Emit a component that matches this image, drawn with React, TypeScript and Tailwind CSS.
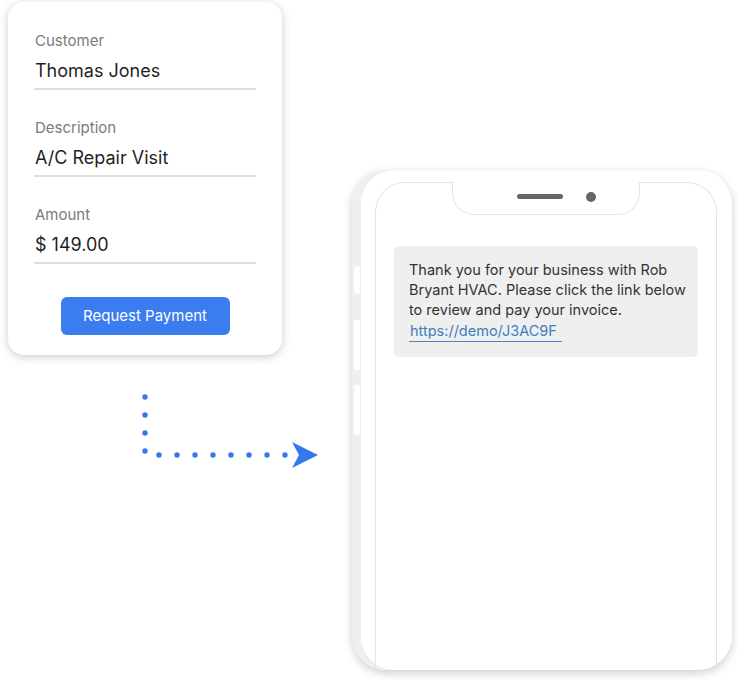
import React from "react";

function Field({ label, value }: { label: string; value: string }) {
  return (
    <div className="border-b-2 border-[#dedede] pb-[5px]">
      <div className="pl-px text-[15px] leading-[20px] text-[#7b7b7b]">{label}</div>
      <div className="mt-[8px] pl-px text-[18px] leading-[24px] text-[#1f1f1f]">{value}</div>
    </div>
  );
}

function Arrow() {
  const vert = [397, 415, 433, 451];
  const horiz = [159, 177, 195, 213, 231, 249, 267, 285];
  return (
    <svg width="344" height="130" viewBox="0 0 344 130" className="block">
      <g transform="translate(-8,-355)" fill="#3677ee">
        {vert.map((y) => (
          <circle key={"v" + y} cx={145} cy={y} r={2.7} />
        ))}
        {horiz.map((x) => (
          <circle key={"h" + x} cx={x} cy={455} r={2.7} />
        ))}
        <path d="M292 442 L318 455 L292 468 L299 455 Z" />
      </g>
    </svg>
  );
}

export default function App() {
  return (
    <div className="w-[738px] h-[680px] bg-white flex font-['Inter','Noto_Sans',sans-serif]">
      <div className="flex flex-col w-[344px] pl-[8px] pt-[2px]">
        <div className="w-[274px] rounded-[16px] bg-white shadow-[0_2px_10px_rgba(0,0,0,0.2)] px-[26px] pt-[29px] pb-[20px] flex flex-col">
          <Field label="Customer" value="Thomas Jones" />
          <div className="mt-[28px]">
            <Field label="Description" value="A/C Repair Visit" />
          </div>
          <div className="mt-[28px]">
            <Field label="Amount" value="$ 149.00" />
          </div>
          <div className="mt-[33px] flex justify-center">
            <button className="w-[169px] h-[38px] rounded-[6px] bg-[#3b7cef] text-white text-[15px] leading-[20px]">
              Request Payment
            </button>
          </div>
        </div>
        <Arrow />
      </div>
      <div className="pt-[170px] pl-[8px]">
        <div className="relative w-[380px] h-[500px] rounded-[34px] bg-white overflow-hidden shadow-[inset_9px_0_0_#efefef,0_3px_10px_rgba(0,0,0,0.2)] pl-[23px] pr-[15px] pt-[12px]">
          <div className="absolute left-[2px] top-[96px] w-[6px] h-[28px] rounded-[2px] bg-white" />
          <div className="absolute left-[2px] top-[150px] w-[6px] h-[50px] rounded-[2px] bg-white" />
          <div className="absolute left-[2px] top-[215px] w-[6px] h-[50px] rounded-[2px] bg-white" />
          <div className="h-[520px] rounded-t-[30px] border-x border-t border-[#e4e4e4] flex flex-col">
            <div className="self-center -mt-px w-[188px] h-[33px] bg-white border-x border-b border-[#e4e4e4] rounded-b-[22px] flex items-center pl-[64px] pb-[3px]">
              <div className="w-[46px] h-[5px] rounded-full bg-[#666666]" />
              <div className="ml-[23px] w-[10px] h-[10px] rounded-full bg-[#666666]" />
            </div>
            <div className="ml-[18px] mt-[31px] w-[304px] rounded-[5px] bg-[#efefef] pl-[15px] pr-[6px] pt-[14px] pb-[15px] text-[14.5px] leading-[20px] text-[#333333]">
              <div>
                Thank you for your business with Rob Bryant HVAC. Please click the link below to review and pay your invoice.
              </div>
              <div className="inline-block mt-[1px] border-b-[1.5px] border-[#4a86c6] text-[#3f7dbf] pl-[1px] pr-[5px]">
                https://demo/J3AC9F
              </div>
            </div>
          </div>
        </div>
      </div>
    </div>
  );
}
